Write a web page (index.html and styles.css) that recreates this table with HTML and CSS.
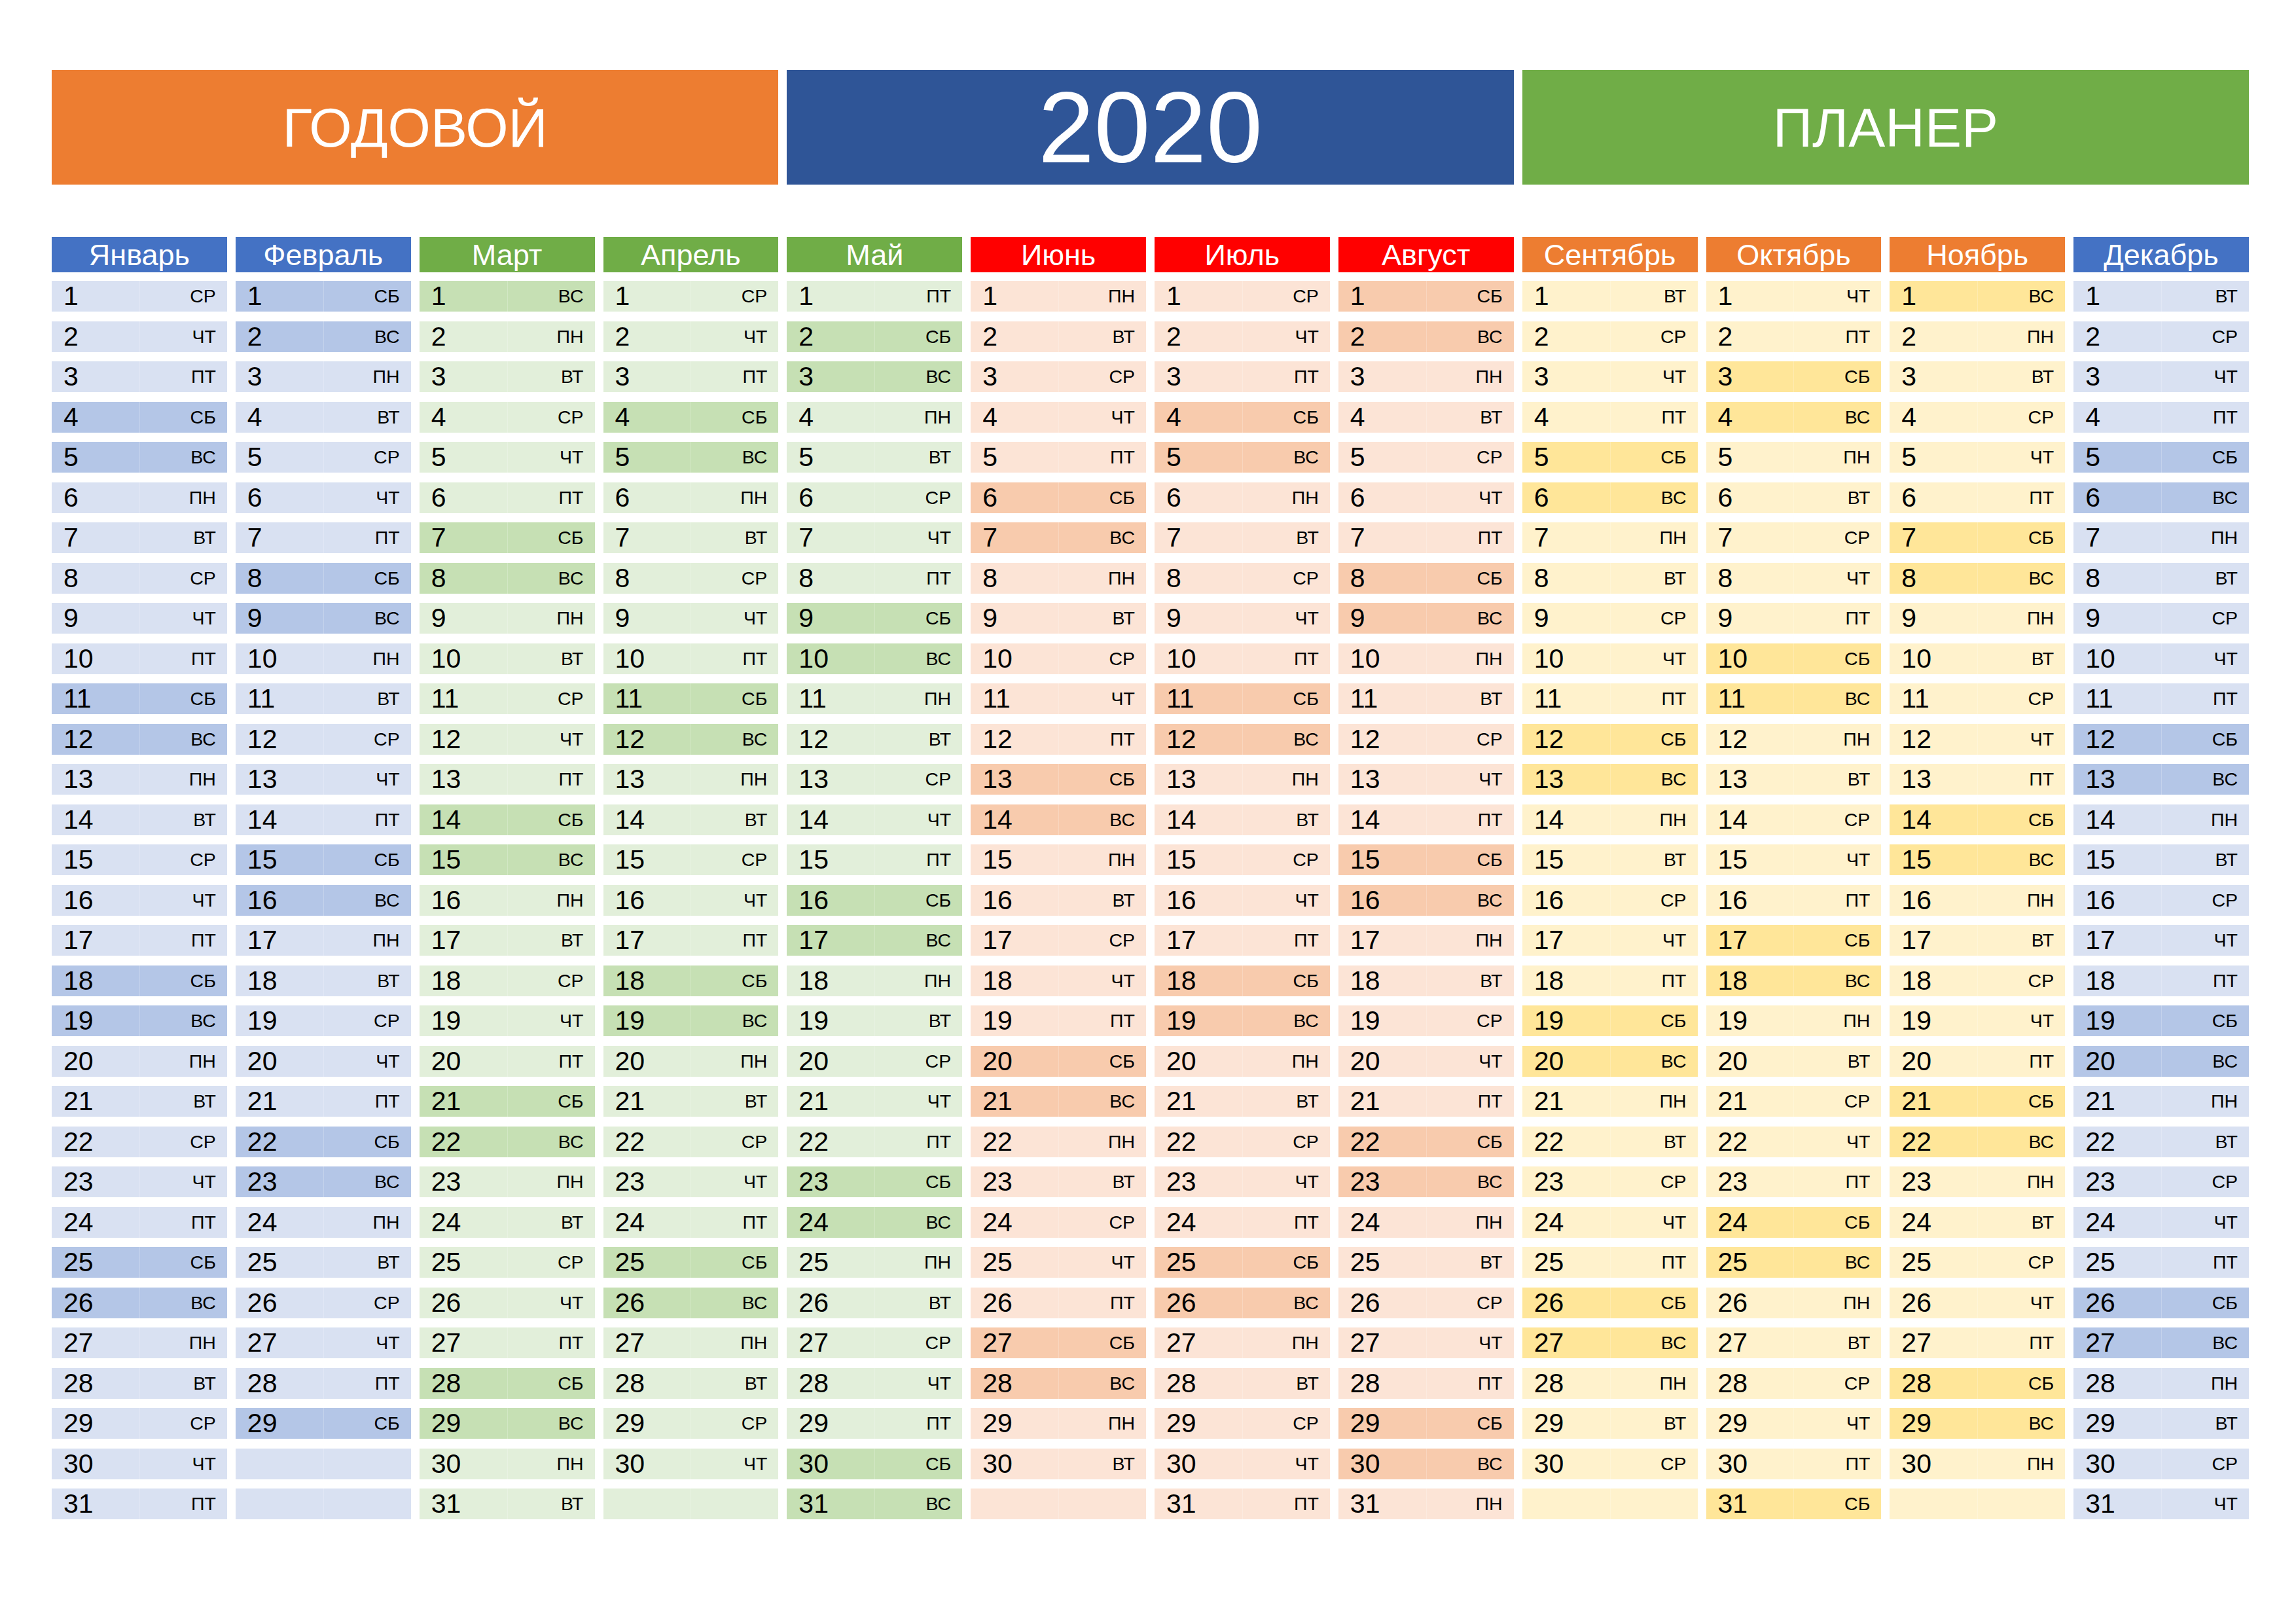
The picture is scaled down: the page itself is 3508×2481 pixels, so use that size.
FILE: index.html
```html
<!DOCTYPE html>
<html lang="ru">
<head>
<meta charset="utf-8">
<title>Годовой планер 2020</title>
<link rel="stylesheet" href="styles.css">
</head>
<body>
<div class="page">
  <header class="top">
    <div class="banner banner-orange">ГОДОВОЙ</div>
    <div class="banner banner-blue year">2020</div>
    <div class="banner banner-green">ПЛАНЕР</div>
  </header>
  <main class="months" id="months"></main>
</div>
<script src="script.js"></script>
</body>
</html>
```

FILE: styles.css
```css
html, body {
  margin: 0;
  padding: 0;
  background: #ffffff;
}
body {
  width: 3508px;
  height: 2481px;
  overflow: hidden;
  font-family: "Liberation Sans", Arial, sans-serif;
  color: #000000;
}
.page {
  padding: 107px 72px 0 79px;
}
.top {
  display: grid;
  grid-template-columns: repeat(3, 1fr);
  column-gap: 13px;
  height: 175px;
}
.banner {
  display: flex;
  align-items: center;
  justify-content: center;
  color: #ffffff;
  font-size: 84px;
  line-height: 1;
}
.banner-orange { background: #ed7d31; }
.banner-blue { background: #2f5597; }
.banner-green { background: #70ad47; }
.year {
  font-size: 154px;
}
.months {
  margin-top: 80px;
  display: grid;
  grid-template-columns: repeat(12, 1fr);
  column-gap: 13px;
}
.month {
  display: flex;
  flex-direction: column;
  gap: 14.5px;
}
.mhead {
  height: 54px;
  margin-bottom: -1.5px;
  display: flex;
  align-items: center;
  justify-content: center;
  color: #ffffff;
  font-size: 45px;
  line-height: 1;
}
.cell {
  height: 47px;
  display: flex;
}
.num, .wd {
  flex: 1;
  display: flex;
  align-items: center;
}
.num {
  padding-left: 18px;
  font-size: 41px;
  line-height: 1;
}
.wd {
  justify-content: flex-end;
  padding-right: 17px;
  font-size: 28.5px;
  line-height: 1;
  border-left: 1px solid rgba(255, 255, 255, 0.22);
}

.t-blue .mhead { background: #4472c4; }
.t-blue .cell { background: #d9e1f2; }
.t-blue .cell.we { background: #b4c6e7; }

.t-green .mhead { background: #70ad47; }
.t-green .cell { background: #e2efda; }
.t-green .cell.we { background: #c6e0b4; }

.t-red .mhead { background: #ff0000; }
.t-red .cell { background: #fce4d6; }
.t-red .cell.we { background: #f8cbad; }

.t-orange .mhead { background: #ed7d31; }
.t-orange .cell { background: #fff2cc; }
.t-orange .cell.we { background: #ffe699; }
```

FILE: script.js
```js
(function () {
  var names = ["Январь", "Февраль", "Март", "Апрель", "Май", "Июнь",
    "Июль", "Август", "Сентябрь", "Октябрь", "Ноябрь", "Декабрь"];
  var themes = ["t-blue", "t-blue", "t-green", "t-green", "t-green", "t-red",
    "t-red", "t-red", "t-orange", "t-orange", "t-orange", "t-blue"];
  var wdays = ["ВС", "ПН", "ВТ", "СР", "ЧТ", "ПТ", "СБ"];
  var root = document.getElementById("months");
  for (var m = 0; m < 12; m++) {
    var col = document.createElement("section");
    col.className = "month " + themes[m];
    var h = document.createElement("div");
    h.className = "mhead";
    h.textContent = names[m];
    col.appendChild(h);
    var days = new Date(2020, m + 1, 0).getDate();
    for (var d = 1; d <= 31; d++) {
      var cell = document.createElement("div");
      cell.className = "cell";
      var n = document.createElement("span");
      n.className = "num";
      var w = document.createElement("span");
      w.className = "wd";
      if (d <= days) {
        var wd = new Date(2020, m, d).getDay();
        if (wd === 0 || wd === 6) cell.className += " we";
        n.textContent = String(d);
        w.textContent = wdays[wd];
      }
      cell.appendChild(n);
      cell.appendChild(w);
      col.appendChild(cell);
    }
    root.appendChild(col);
  }
})();
```
